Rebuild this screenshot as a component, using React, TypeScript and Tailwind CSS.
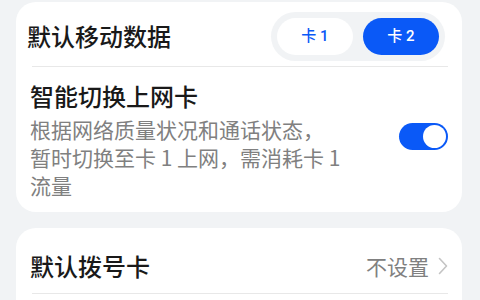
export default function App() {
  return (
    <div className="w-[480px] h-[300px] overflow-hidden bg-[#f1f3f5] pt-[2px] pl-[16px] pr-[18px] font-['Noto_Sans_CJK_SC',sans-serif] text-[#191919]">
      <div className="bg-white rounded-[20px]">
        <div className="h-[64px] pt-[4px] pl-[11px] pr-[17px] flex items-center justify-between">
          <span className="text-[24px] font-medium leading-[32px]">默认移动数据</span>
          <div className="flex items-center gap-[10px] p-[6px] rounded-full bg-[#f1f3f5] font-['Roboto','Noto_Sans_CJK_SC',sans-serif]">
            <button className="w-[76px] h-[37px] rounded-full bg-white text-[15px] font-medium text-[#0a59f7]">
              卡 1
            </button>
            <button className="w-[76px] h-[37px] rounded-full bg-[#0a59f7] text-[15px] font-medium text-white">
              卡 2
            </button>
          </div>
        </div>
        <div className="h-px bg-[#e8e8e8] ml-[16px] mr-[14px]" />
        <div className="pt-[13px] pb-[13px] pl-[14px] pr-[14px] flex items-center justify-between">
          <div>
            <div className="text-[24px] font-medium leading-[32px]">智能切换上网卡</div>
            <div className="mt-[3px] text-[21px] leading-[28px] text-[#808080]">
              根据网络质量状况和通话状态，
              <br />
              暂时切换至卡 1 上网，需消耗卡 1
              <br />
              流量
            </div>
          </div>
          <div className="w-[49px] h-[27px] rounded-full bg-[#0a59f7] p-[2px] flex justify-end mt-[-6px]">
            <div className="w-[23px] h-[23px] rounded-full bg-white" />
          </div>
        </div>
      </div>
      <div className="mt-[16px] bg-white rounded-[20px] h-[120px]">
        <div className="h-[65px] pt-[10px] pl-[14px] pr-[14px] flex items-center justify-between">
          <span className="text-[24px] font-medium leading-[32px]">默认拨号卡</span>
          <div className="flex items-center gap-[9px]">
            <span className="text-[21px] leading-[28px] text-[#808080]">不设置</span>
            <svg width="10" height="18" viewBox="0 0 10 18" fill="none">
              <polyline points="1.5,1.5 8.5,9 1.5,16.5" stroke="#c4c4c4" strokeWidth="1.6" strokeLinecap="round" strokeLinejoin="round" />
            </svg>
          </div>
        </div>
        <div className="h-px bg-[#e8e8e8] ml-[16px] mr-[14px]" />
      </div>
    </div>
  );
}
